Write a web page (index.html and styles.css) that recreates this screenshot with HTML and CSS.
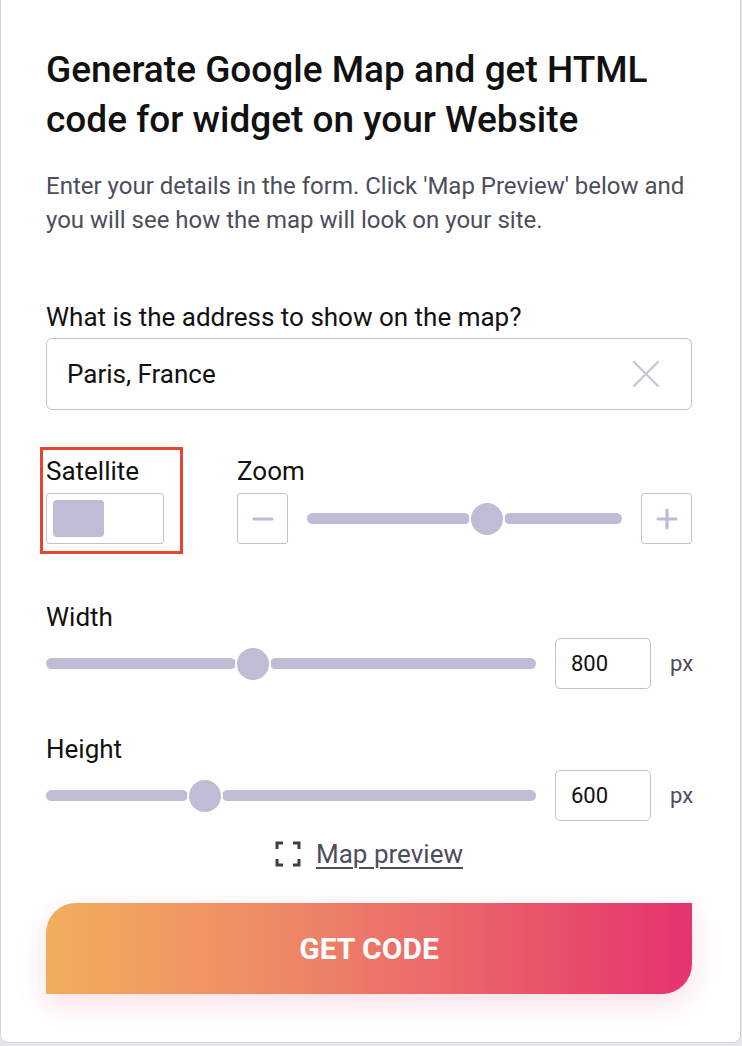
FILE: index.html
```html
<!DOCTYPE html>
<html>
<head>
<meta charset="utf-8">
<link rel="stylesheet" href="styles.css">
</head>
<body>
<div class="card">
  <h1 class="title">Generate Google Map and get HTML code for widget on your Website</h1>
  <p class="lead">Enter your details in the form. Click 'Map Preview' below and you will see how the map will look on your site.</p>

  <div class="field">
    <label class="label">What is the address to show on the map?</label>
    <div class="input">
      <span class="input-text">Paris, France</span>
      <svg class="clear" width="28" height="28" viewBox="0 0 28 28"><path d="M2 2L26 26M26 2L2 26" stroke="#c9c7d5" stroke-width="2.4" fill="none" stroke-linecap="round"/></svg>
    </div>
  </div>

  <div class="row-controls">
    <div class="satellite">
      <div class="label">Satellite</div>
      <div class="toggle"><div class="knob"></div></div>
    </div>
    <div class="zoom">
      <div class="label">Zoom</div>
      <div class="zoom-row">
        <div class="sq-btn"><svg width="22" height="22" viewBox="0 0 22 22"><path d="M2 11H20" stroke="#bfbcd6" stroke-width="3.2" stroke-linecap="round"/></svg></div>
        <div class="slider">
          <div class="seg" style="width:163px"></div>
          <div class="thumb"></div>
          <div class="seg grow"></div>
        </div>
        <div class="sq-btn"><svg width="22" height="22" viewBox="0 0 22 22"><path d="M2 11H20M11 2V20" stroke="#bfbcd6" stroke-width="3.2" stroke-linecap="round"/></svg></div>
      </div>
    </div>
  </div>

  <div class="field dim">
    <div class="label">Width</div>
    <div class="dim-row">
      <div class="slider">
        <div class="seg" style="width:190px"></div>
        <div class="thumb"></div>
        <div class="seg grow"></div>
      </div>
      <div class="num">800</div>
      <span class="unit">px</span>
    </div>
  </div>

  <div class="field dim">
    <div class="label">Height</div>
    <div class="dim-row">
      <div class="slider">
        <div class="seg" style="width:142px"></div>
        <div class="thumb"></div>
        <div class="seg grow"></div>
      </div>
      <div class="num">600</div>
      <span class="unit">px</span>
    </div>
  </div>

  <div class="preview">
    <svg width="26" height="26" viewBox="0 0 26 26"><path d="M2 8V2H8M18 2H24V8M24 18V24H18M8 24H2V18" stroke="#3c3c4c" stroke-width="3" fill="none"/></svg>
    <a class="preview-link">Map preview</a>
  </div>

  <div class="btn">GET CODE</div>
</div>
</body>
</html>
```

FILE: styles.css
```css
* { box-sizing: border-box; }
html, body { margin: 0; padding: 0; }
body {
  background: #e6e6ec;
  font-family: Roboto, "Liberation Sans", Arial, sans-serif;
  width: 742px;
  height: 1046px;
  overflow: hidden;
}
.card {
  width: 741px;
  height: 1043px;
  background: #fff;
  border: 1px solid #d6d6da;
  border-top: none;
  border-radius: 0 0 8px 8px;
  padding: 45px 48px 0 45px;
  display: flex;
  flex-direction: column;
}
.title {
  margin: 0;
  font-size: 37px;
  line-height: 50px;
  font-weight: 500;
  color: #111;
  letter-spacing: 0;
}
.lead {
  margin: 24px 0 0;
  font-size: 24px;
  line-height: 34px;
  color: #4d4d5c;
}
.label {
  display: block;
  font-size: 26px;
  line-height: 28px;
  color: #111;
}
.field { display: flex; flex-direction: column; }
.lead + .field { margin-top: 66px; }
.input {
  margin-top: 7px;
  height: 72px;
  border: 1.5px solid #c4c0da;
  border-radius: 6px;
  display: flex;
  align-items: center;
  justify-content: space-between;
  padding: 0 31px 0 20px;
}
.input-text { font-size: 26px; color: #111; }
.row-controls {
  margin-top: 47px;
  display: flex;
  gap: 73px;
}
.satellite {
  position: relative;
  width: 118px;
  flex: none;
  display: flex;
  flex-direction: column;
}
.satellite::after {
  content: "";
  position: absolute;
  top: -10px;
  right: -19px;
  bottom: -10px;
  left: -6px;
  border: 3px solid #e8432c;
  pointer-events: none;
}
.toggle {
  margin-top: 8px;
  height: 51px;
  border: 1.5px solid #c4c0da;
  border-radius: 3px;
  padding: 6px;
}
.knob {
  width: 51px;
  height: 37px;
  background: #bfbcd6;
  border-radius: 4px;
}
.zoom { flex: 1; display: flex; flex-direction: column; }
.zoom-row {
  margin-top: 8px;
  height: 51px;
  display: flex;
  align-items: center;
  gap: 19px;
}
.sq-btn {
  width: 51px;
  height: 51px;
  border: 1.5px solid #c4c0da;
  border-radius: 3px;
  display: flex;
  align-items: center;
  justify-content: center;
  flex: none;
}
.slider {
  flex: 1;
  display: flex;
  align-items: center;
  height: 36px;
}
.seg {
  height: 11px;
  background: #bfbcd6;
  border-radius: 6px;
  flex: none;
}
.seg.grow { flex: 1; }
.thumb {
  width: 36px;
  height: 36px;
  border-radius: 50%;
  background: #bfbcd6;
  border: 2px solid #fff;
  margin: 0 -1px;
  flex: none;
  position: relative;
  z-index: 1;
}
.dim { margin-top: 59px; }
.dim + .dim { margin-top: 46px; }
.dim-row {
  margin-top: 7px;
  height: 51px;
  display: flex;
  align-items: center;
}
.num {
  margin-left: 19px;
  width: 96px;
  height: 51px;
  border: 1.5px solid #c4c0da;
  border-radius: 5px;
  font-size: 22px;
  color: #111;
  display: flex;
  align-items: center;
  padding-left: 15px;
}
.unit {
  margin-left: 19px;
  font-size: 22px;
  color: #4d4d5c;
  width: 22px;
}
.preview {
  margin-top: 18px;
  display: flex;
  align-items: center;
  justify-content: center;
  gap: 15px;
  height: 30px;
}
.preview-link {
  font-size: 26px;
  color: #4d4d5c;
  text-decoration: underline;
  text-underline-offset: 4px;
  text-decoration-thickness: 1.5px;
}
.btn {
  margin-top: 34px;
  height: 91px;
  border-radius: 30px 0 30px 0;
  background: linear-gradient(90deg, #f2ae5d 0%, #ee8a65 35%, #eb6a6a 60%, #e5336e 100%);
  box-shadow: 0 10px 30px rgba(235, 70, 120, 0.18);
  color: #fff;
  font-size: 30px;
  font-weight: 700;
  display: flex;
  align-items: center;
  justify-content: center;
  letter-spacing: 0;
}
```
